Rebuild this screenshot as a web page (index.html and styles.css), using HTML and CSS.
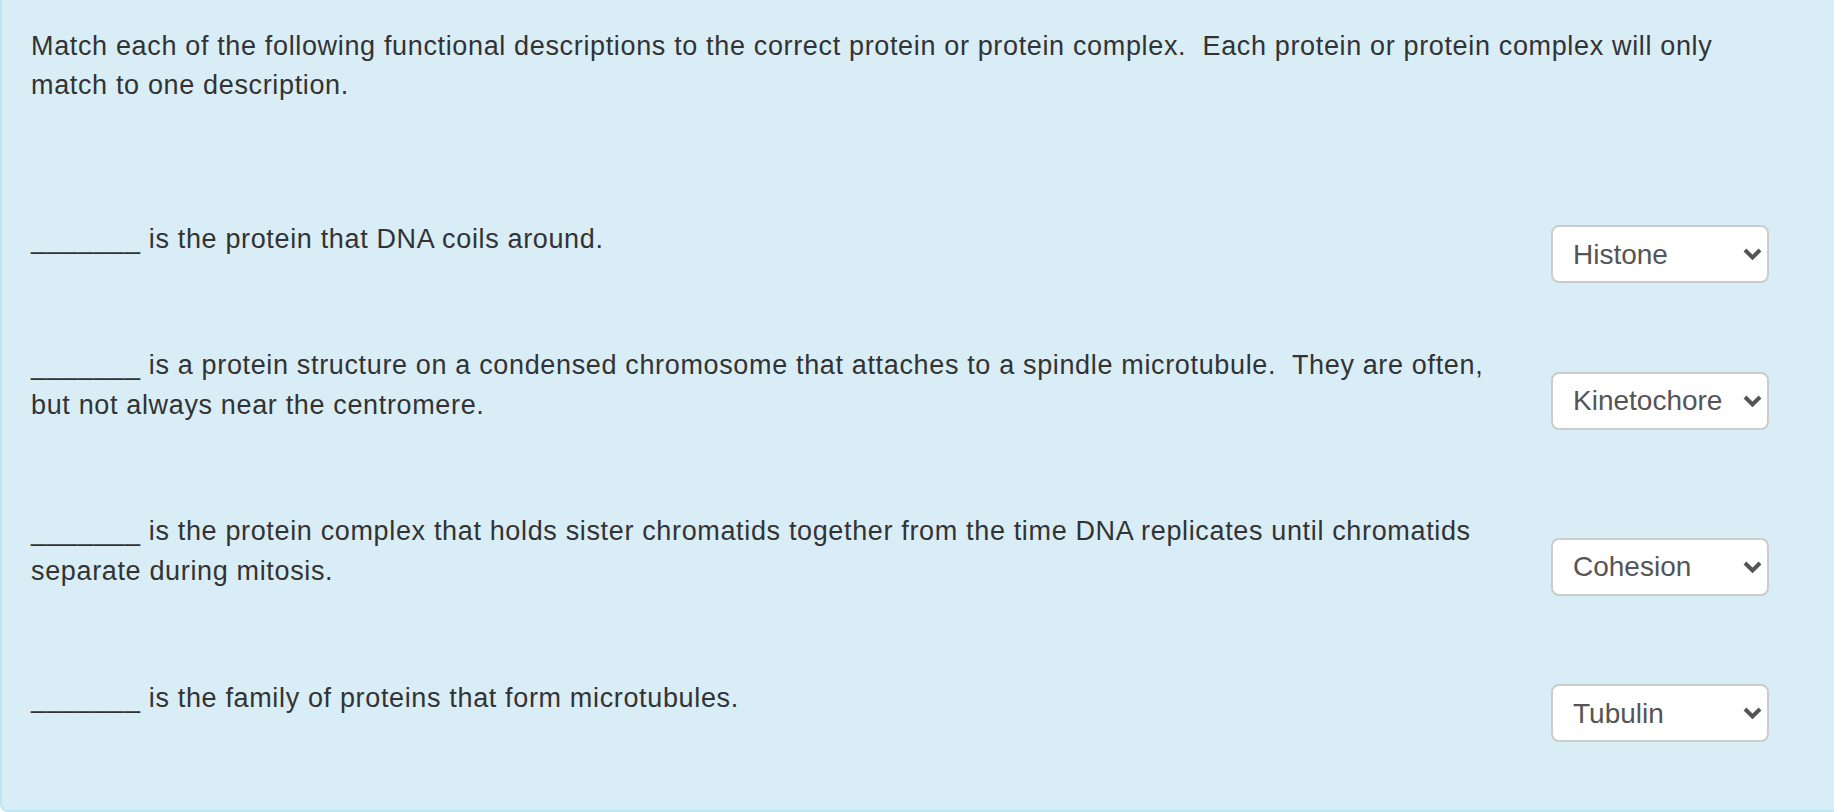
FILE: index.html
```html
<!DOCTYPE html>
<html>
<head>
<meta charset="utf-8">
<link rel="stylesheet" href="styles.css">
</head>
<body>
<div class="panel">
  <p class="intro">Match each of the following functional descriptions to the correct protein or protein complex.&nbsp; Each protein or protein complex will only match to one description.</p>
  <div class="rows">
    <div class="row">
      <div class="q">_______ is the protein that DNA coils around.</div>
      <div class="sel"><span>Histone</span><svg width="19" height="12" viewBox="0 0 19 12"><path d="M2 2 L9.5 9.5 L17 2" fill="none" stroke="#555" stroke-width="4"/></svg></div>
    </div>
    <div class="row">
      <div class="q">_______ is a protein structure on a condensed chromosome that attaches to a spindle microtubule.&nbsp; They are often, but not always near the centromere.</div>
      <div class="sel"><span>Kinetochore</span><svg width="19" height="12" viewBox="0 0 19 12"><path d="M2 2 L9.5 9.5 L17 2" fill="none" stroke="#555" stroke-width="4"/></svg></div>
    </div>
    <div class="row">
      <div class="q">_______ is the protein complex that holds sister chromatids together from the time DNA replicates until chromatids separate during mitosis.</div>
      <div class="sel"><span>Cohesion</span><svg width="19" height="12" viewBox="0 0 19 12"><path d="M2 2 L9.5 9.5 L17 2" fill="none" stroke="#555" stroke-width="4"/></svg></div>
    </div>
    <div class="row">
      <div class="q">_______ is the family of proteins that form microtubules.</div>
      <div class="sel"><span>Tubulin</span><svg width="19" height="12" viewBox="0 0 19 12"><path d="M2 2 L9.5 9.5 L17 2" fill="none" stroke="#555" stroke-width="4"/></svg></div>
    </div>
  </div>
</div>
</body>
</html>
```
FILE: styles.css
```css
html, body {
  margin: 0;
  padding: 0;
  background: #ffffff;
}
.panel {
  box-sizing: border-box;
  background: #d9edf7;
  border: 2px solid #bce8f1;
  border-top: 0;
  border-right: 0;
  border-bottom-left-radius: 8px;
  height: 812px;
  padding: 27px 0 0 29px;
  font-family: "Liberation Sans", Arial, Helvetica, sans-serif;
  font-size: 27px;
  letter-spacing: 0.65px;
  line-height: 39.3px;
  color: #333;
}
.intro {
  margin: 0;
  width: 1720px;
}
.rows {
  margin-top: 114px;
  display: flex;
  flex-direction: column;
  gap: 57.5px;
}
.row {
  display: flex;
  align-items: center;
}
.q {
  width: 1470px;
  padding-bottom: 30px;
  flex: none;
}
.sel {
  margin-left: 50px;
  width: 218px;
  height: 58px;
  box-sizing: border-box;
  background: #fff;
  border: 2px solid #ccc;
  border-radius: 8px;
  padding: 0 5px 0 20px;
  display: flex;
  align-items: center;
  justify-content: space-between;
  color: #555;
  font-size: 28px;
  letter-spacing: 0;
  flex: none;
}
.sel svg {
  flex: none;
}
```
